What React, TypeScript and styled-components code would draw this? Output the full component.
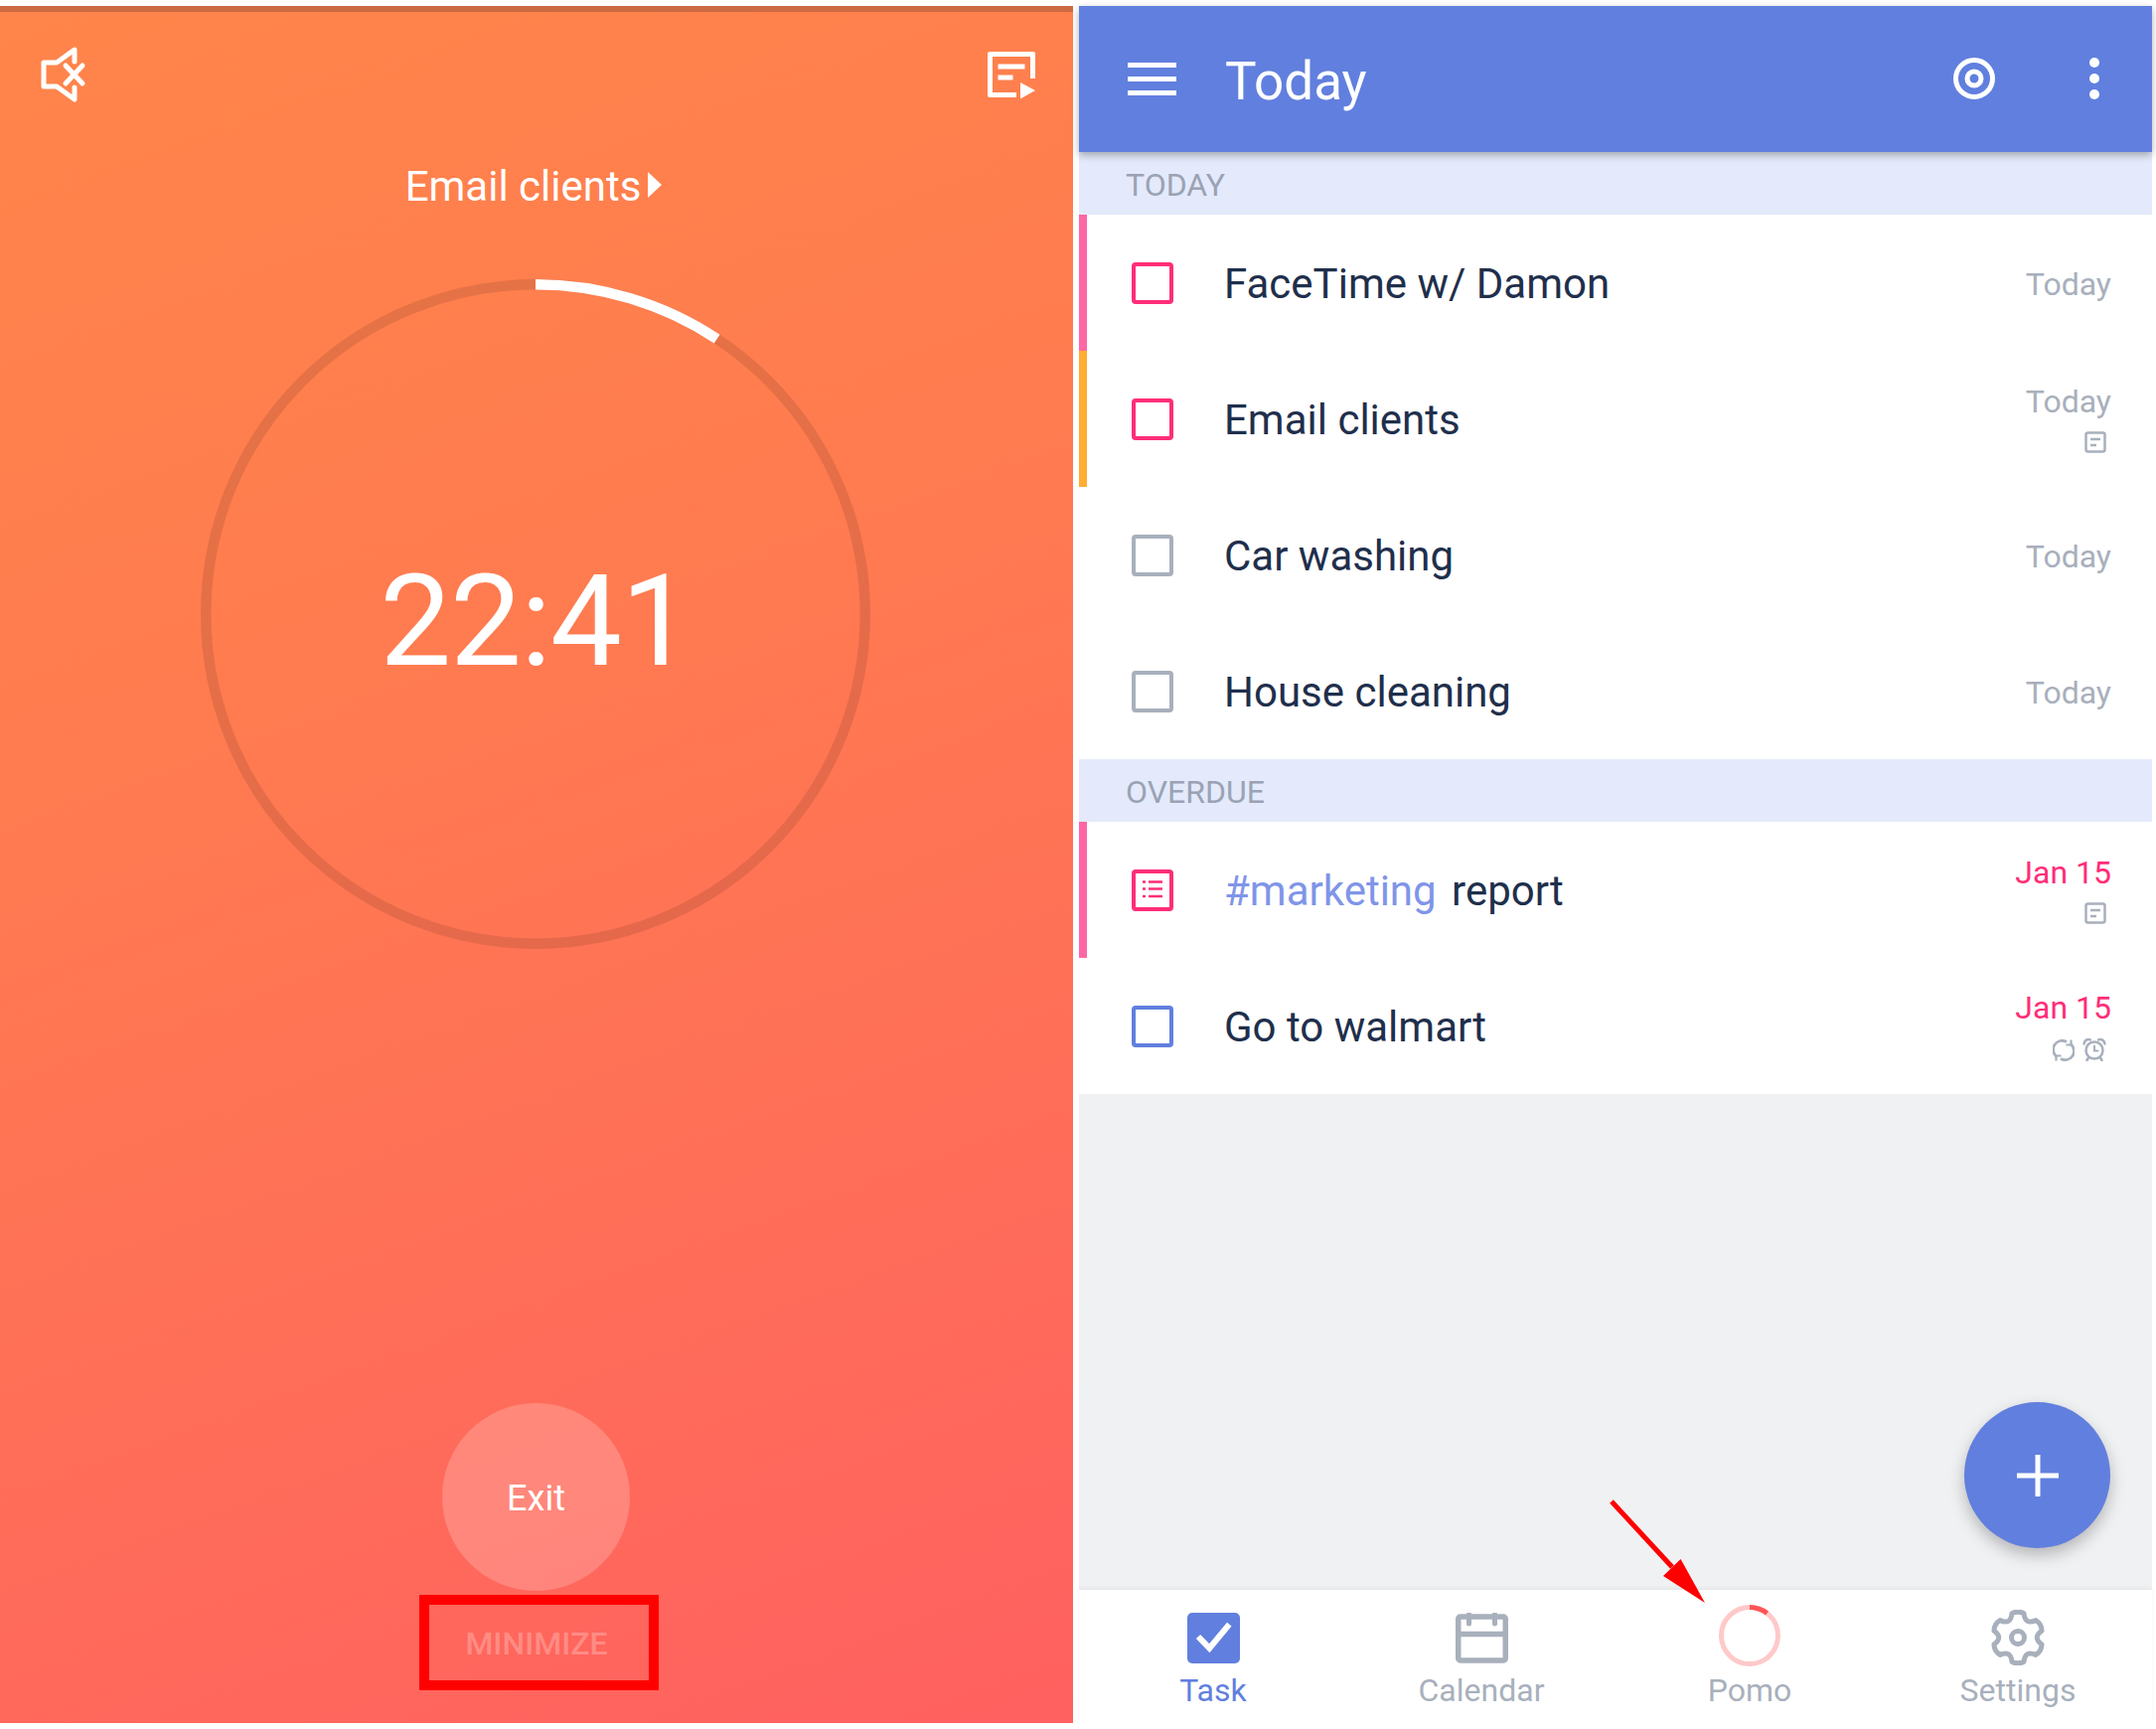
import styled, { createGlobalStyle } from 'styled-components';

const BLUE = '#617fde';
const PINK = '#ff2d78';
const GREY = '#a8b0bc';
const INK = '#1f2f4c';

const GlobalStyle = createGlobalStyle`
  html, body {
    margin: 0;
    padding: 0;
    background: #fff;
  }
  body {
    font-family: Roboto, "Liberation Sans", sans-serif;
  }
`;

const Screen = styled.div`
  position: relative;
  width: 2170px;
  height: 1740px;
  box-sizing: border-box;
  padding: 6px 4px 6px 0;
  display: flex;
  gap: 6px;
  overflow: hidden;
`;

/* left phone: pomo timer */
const TimerPanel = styled.section`
  width: 1080px;
  display: flex;
  flex-direction: column;
  align-items: center;
  padding-bottom: 33px;
  box-sizing: border-box;
  background: linear-gradient(160deg, #ff854a 0%, #ff7b50 38%, #ff6d59 72%, #ff6060 100%);
`;

const StatusStrip = styled.div`
  align-self: stretch;
  height: 6px;
  background: #cc6a42;
`;

const TimerTools = styled.div`
  align-self: stretch;
  display: flex;
  justify-content: space-between;
  padding: 18px 20px 0 20px;
`;

const TaskLink = styled.div`
  margin-top: 43px;
  padding-right: 6px;
  display: flex;
  align-items: flex-start;
  gap: 7px;
  color: #fff;
  font-size: 42px;
  line-height: 50px;
`;

const Caret = styled.span`
  margin-top: 10px;
  width: 0;
  height: 0;
  border-left: 14px solid #fff;
  border-top: 13px solid transparent;
  border-bottom: 13px solid transparent;
`;

const Dial = styled.div`
  margin-top: 68px;
  margin-right: 2px;
  width: 674px;
  height: 674px;
  display: grid;
  place-items: center;

  & > * {
    grid-area: 1 / 1;
  }
`;

const Clock = styled.div`
  padding-top: 14px;
  color: #fff;
  font-size: 128px;
  line-height: 150px;
  letter-spacing: -1px;
`;

const ExitButton = styled.button`
  margin-top: auto;
  margin-right: 1px;
  width: 189px;
  height: 189px;
  border: 0;
  padding: 2px 0 0;
  border-radius: 50%;
  background: rgba(255, 255, 255, 0.2);
  color: #fff;
  font: 400 36px Roboto, sans-serif;
`;

const MinimizeBox = styled.div`
  margin-top: 4px;
  margin-left: 5px;
  width: 241px;
  height: 96px;
  box-sizing: border-box;
  border: 10px solid #f00;
  padding: 2px 5px 0 0;
  display: flex;
  align-items: center;
  justify-content: center;
  color: rgba(255, 255, 255, 0.25);
  font-size: 32px;
  font-weight: 500;
`;

/* right phone: task list */
const ListPanel = styled.section`
  flex: 1;
  display: flex;
  flex-direction: column;
`;

const AppBar = styled.header`
  position: relative;
  z-index: 1;
  height: 147px;
  flex: none;
  display: flex;
  align-items: center;
  padding: 0 53px 0 49px;
  background: ${BLUE};
  box-shadow: 0 3px 8px rgba(0, 0, 0, 0.3);
`;

const AppTitle = styled.h1`
  flex: 1;
  margin: 4px 0 0 49px;
  color: #fff;
  font-size: 53px;
  font-weight: 400;
  line-height: 60px;
`;

const AppActions = styled.div`
  display: flex;
  align-items: center;
  gap: 94px;
  margin-bottom: 1px;
`;

const SectionBar = styled.div`
  height: 63px;
  flex: none;
  box-sizing: border-box;
  display: flex;
  align-items: center;
  padding: 2px 0 0 47px;
  background: #e4eafb;
  color: #9aa3b5;
  font-size: 32px;
`;

const Row = styled.div<{ $accent?: string }>`
  height: 137px;
  flex: none;
  box-sizing: border-box;
  display: flex;
  align-items: center;
  padding: 0 41px 0 45px;
  border-left: 8px solid ${(p) => p.$accent || 'transparent'};
  background: #fff;
`;

const Checkbox = styled.div<{ $color: string }>`
  width: 42px;
  height: 42px;
  flex: none;
  box-sizing: border-box;
  border: 4px solid ${(p) => p.$color};
  border-radius: 4px;
  color: ${(p) => p.$color};
`;

const RowTitle = styled.div`
  flex: 1;
  margin-left: 51px;
  padding-top: 2px;
  color: ${INK};
  font-size: 42px;
  line-height: 50px;
`;

const Tag = styled.span`
  margin-right: 5px;
  color: #7f95e8;
`;

const RowMeta = styled.div<{ $overdue?: boolean; $stacked?: boolean }>`
  display: flex;
  flex-direction: column;
  align-items: flex-end;
  color: ${(p) => (p.$overdue ? PINK : GREY)};
  font-size: 32px;
  line-height: 38px;
  padding: ${(p) => (p.$stacked ? '0 0 3px' : '2px 0 0')};
`;

const MetaIcons = styled.div`
  display: flex;
  align-items: flex-end;
  gap: 8px;
  margin-top: 11px;
  margin-right: 5px;
  color: ${GREY};
`;

const EmptyArea = styled.div`
  position: relative;
  flex: 1;
  background: #f0f1f3;
`;

const Fab = styled.button`
  position: absolute;
  right: 42px;
  bottom: 42px;
  width: 147px;
  height: 147px;
  border: 0;
  padding: 0;
  border-radius: 50%;
  background: ${BLUE};
  box-shadow: 0 7px 16px rgba(0, 0, 0, 0.25);
  display: flex;
  align-items: center;
  justify-content: center;
`;

const TabBar = styled.nav`
  position: relative;
  height: 134px;
  flex: none;
  display: grid;
  grid-template-columns: repeat(4, 1fr);
  padding-top: 14px;
  box-sizing: border-box;
  background: #fff;
  box-shadow: 0 -2px 4px rgba(0, 0, 0, 0.05);
`;

const Tab = styled.div<{ $active?: boolean }>`
  display: flex;
  flex-direction: column;
  align-items: center;
  color: ${(p) => (p.$active ? BLUE : GREY)};
  font-size: 32px;
  line-height: 38px;
`;

const TabIcon = styled.div<{ $flush?: boolean }>`
  height: 64px;
  box-sizing: border-box;
  padding-top: ${(p) => (p.$flush ? 0 : 4)}px;
  margin-bottom: 4px;
  display: flex;
  align-items: center;
  justify-content: center;
`;

const PointerArrow = styled.svg`
  position: absolute;
  left: 1620px;
  top: 1509px;
`;

const ProgressRing = ({ size, width, track, color, degrees }: { size: number; width: number; track: string; color: string; degrees: number }) => {
  const c = size / 2;
  const r = c - width / 2;
  return (
    <svg width={size} height={size} viewBox={`0 0 ${size} ${size}`}>
      <circle cx={c} cy={c} r={r} fill="none" stroke={track} strokeWidth={width} />
      <circle
        cx={c}
        cy={c}
        r={r}
        fill="none"
        stroke={color}
        strokeWidth={width}
        pathLength={360}
        strokeDasharray={`${degrees} 360`}
        transform={`rotate(-90 ${c} ${c})`}
      />
    </svg>
  );
};

const MuteIcon = () => (
  <svg width="90" height="90" viewBox="0 0 90 90" fill="none" stroke="#fff" strokeWidth="5" strokeLinecap="round" strokeLinejoin="round">
    <path d="M55 32V20L37 33H24V57H37L55 70V58" />
    <path d="M46 36L63 54M63 36L46 54" />
  </svg>
);

const QueueIcon = () => (
  <svg width="90" height="90" viewBox="0 0 90 90" fill="#fff">
    <path d="M26 22H70a2 2 0 0 1 2 2V49H67V27H29V63H53V68H26a2 2 0 0 1-2-2V24a2 2 0 0 1 2-2Z" />
    <rect x="34.500" y="34.500" width="27" height="5" />
    <rect x="34.500" y="45.500" width="15" height="5" />
    <path d="M57 53L72 61L57 69.500Z" />
  </svg>
);

const MenuIcon = () => (
  <svg width="49" height="33" viewBox="0 0 49 33" fill="#fff">
    <rect width="49" height="5" />
    <rect y="14" width="49" height="5" />
    <rect y="28" width="49" height="5" />
  </svg>
);

const TargetIcon = () => (
  <svg width="44" height="44" viewBox="0 0 44 44" fill="none" stroke="#fff" strokeWidth="5">
    <circle cx="22" cy="22" r="18.500" />
    <circle cx="22" cy="22" r="7" />
  </svg>
);

const DotsIcon = () => (
  <svg width="10" height="42" viewBox="0 0 10 42" fill="#fff">
    <circle cx="5" cy="5" r="5" />
    <circle cx="5" cy="21" r="5" />
    <circle cx="5" cy="37" r="5" />
  </svg>
);

const NoteLinesIcon = () => (
  <svg width="34" height="34" viewBox="0 0 34 34" stroke="currentColor" strokeWidth="2.500" fill="none">
    <path d="M7 8.500H10M13 8.500H27M7 15.500H10M13 15.500H27M7 23H10M13 23H27" />
  </svg>
);

const NoteIcon = () => (
  <svg width="22" height="22" viewBox="0 0 22 22" fill="none" stroke="currentColor" strokeWidth="2.500">
    <rect x="1.500" y="1.500" width="19" height="19" rx="2" />
    <path d="M6 8H16M6 14H12" />
  </svg>
);

const RepeatIcon = () => (
  <svg width="22" height="22" viewBox="0 0 22 22" fill="none" stroke="currentColor" strokeWidth="2.800" strokeLinejoin="round">
    <path d="M14 2.500A9 9 0 0 0 3.500 17" />
    <path d="M8 19.500A9 9 0 0 0 18.500 5" />
    <path d="M18.500 0.500V5.500H13.500M3.500 21.500V16.500H8.500" strokeWidth="2.200" />
  </svg>
);

const AlarmIcon = () => (
  <svg width="24" height="24" viewBox="0 0 24 24" fill="none" stroke="currentColor" strokeWidth="2.500" strokeLinecap="round">
    <circle cx="12" cy="13" r="8.500" />
    <path d="M12 8.500V13.500H15.500" strokeWidth="2" />
    <path d="M1.500 6.500C2 3 5 1 8 2.500M22.500 6.500C22 3 19 1 16 2.500" />
    <path d="M6 20.500L4.500 23M18 20.500L19.500 23" />
  </svg>
);

const TaskIcon = () => (
  <svg width="53" height="51" viewBox="0 0 53 51">
    <rect width="53" height="51" rx="5" fill={BLUE} />
    <path d="M11 24L22.300 35.700L42.300 11.700" fill="none" stroke="#fff" strokeWidth="6" />
  </svg>
);

const CalendarIcon = () => (
  <svg width="53" height="51" viewBox="0 0 53 51" fill="none" stroke={GREY} strokeWidth="5.500">
    <rect x="2.750" y="4" width="47.500" height="44" rx="2" />
    <path d="M2.750 21.500H50.250" />
    <path d="M13.500 1.500V11M39.500 1.500V11" strokeLinecap="round" strokeWidth="5" />
  </svg>
);

// six lobed cog, built from polar points
const polar = (deg: number, r: number) => {
  const a = (deg * Math.PI) / 180;
  return `${(28 + r * Math.cos(a)).toFixed(2)} ${(28 + r * Math.sin(a)).toFixed(2)}`;
};

const cogPath = () => {
  let d = `M${polar(-90 - 14, 25)}`;
  for (let i = 0; i < 6; i++) {
    const a = -90 + i * 60;
    d += `Q${polar(a, 27.5)} ${polar(a + 14, 25)}`;
    d += `Q${polar(a + 30, 14.5)} ${polar(a + 46, 25)}`;
  }
  return `${d}Z`;
};

const SettingsIcon = () => (
  <svg width="56" height="56" viewBox="0 0 56 56" fill="none" stroke={GREY} strokeWidth="5">
    <path d={cogPath()} strokeLinejoin="round" />
    <circle cx="28" cy="28" r="6.500" />
  </svg>
);

type Task = {
  title: string;
  tag?: string;
  date: string;
  accent?: string;
  box: string;
  overdue?: boolean;
  note?: boolean;
  noteBox?: boolean;
  reminder?: boolean;
};

const todayTasks: Task[] = [
  { title: 'FaceTime w/ Damon', date: 'Today', accent: '#ff66a6', box: PINK },
  { title: 'Email clients', date: 'Today', accent: '#ffad33', box: PINK, note: true },
  { title: 'Car washing', date: 'Today', box: GREY },
  { title: 'House cleaning', date: 'Today', box: GREY },
];

const overdueTasks: Task[] = [
  { title: 'report', tag: '#marketing', date: 'Jan 15', accent: '#ff66a6', box: PINK, overdue: true, note: true, noteBox: true },
  { title: 'Go to walmart', date: 'Jan 15', box: BLUE, overdue: true, reminder: true },
];

const TaskRow = ({ task }: { task: Task }) => {
  const stacked = task.note || task.reminder;
  return (
    <Row $accent={task.accent}>
      <Checkbox $color={task.box}>{task.noteBox && <NoteLinesIcon />}</Checkbox>
      <RowTitle>
        {task.tag && <Tag>{task.tag} </Tag>}
        {task.title}
      </RowTitle>
      <RowMeta $overdue={task.overdue} $stacked={stacked}>
        {task.date}
        {stacked && (
          <MetaIcons>
            {task.note && <NoteIcon />}
            {task.reminder && <RepeatIcon />}
            {task.reminder && <AlarmIcon />}
          </MetaIcons>
        )}
      </RowMeta>
    </Row>
  );
};

const App = () => (
  <Screen>
    <GlobalStyle />
    <TimerPanel>
      <StatusStrip />
      <TimerTools>
        <MuteIcon />
        <QueueIcon />
      </TimerTools>
      <TaskLink>
        Email clients
        <Caret />
      </TaskLink>
      <Dial>
        <ProgressRing size={674} width={10.5} track="rgba(0, 0, 0, 0.1)" color="#fff" degrees={33.4} />
        <Clock>22:41</Clock>
      </Dial>
      <ExitButton>Exit</ExitButton>
      <MinimizeBox>MINIMIZE</MinimizeBox>
    </TimerPanel>

    <ListPanel>
      <AppBar>
        <MenuIcon />
        <AppTitle>Today</AppTitle>
        <AppActions>
          <TargetIcon />
          <DotsIcon />
        </AppActions>
      </AppBar>
      <SectionBar>TODAY</SectionBar>
      {todayTasks.map((task) => (
        <TaskRow key={task.title} task={task} />
      ))}
      <SectionBar>OVERDUE</SectionBar>
      {overdueTasks.map((task) => (
        <TaskRow key={task.title} task={task} />
      ))}
      <EmptyArea>
        <Fab aria-label="Add task">
          <svg width="44" height="44" viewBox="0 0 44 44" stroke="#fff" strokeWidth="5">
            <path d="M22 1V43M1 22H43" />
          </svg>
        </Fab>
      </EmptyArea>
      <TabBar>
        <Tab $active>
          <TabIcon>
            <TaskIcon />
          </TabIcon>
          Task
        </Tab>
        <Tab>
          <TabIcon>
            <CalendarIcon />
          </TabIcon>
          Calendar
        </Tab>
        <Tab>
          <TabIcon $flush>
            <ProgressRing size={62} width={5} track="#ffc9c9" color="#ff5555" degrees={38} />
          </TabIcon>
          Pomo
        </Tab>
        <Tab>
          <TabIcon>
            <SettingsIcon />
          </TabIcon>
          Settings
        </Tab>
      </TabBar>
    </ListPanel>

    <PointerArrow width="100" height="108" viewBox="0 0 100 108">
      <path d="M2 2L63 68" stroke="#f00" strokeWidth="5" />
      <path d="M96 104L71.600 60L54 77Z" fill="#f00" />
    </PointerArrow>
  </Screen>
);

export default App;
